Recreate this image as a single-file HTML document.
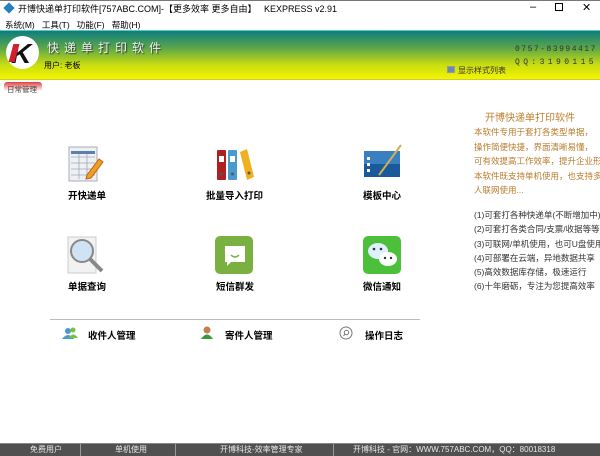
<!DOCTYPE html>
<html><head><meta charset="utf-8"><style>
*{margin:0;padding:0;box-sizing:border-box}
body{width:600px;height:456px;background:#fff;position:relative;overflow:hidden;font-family:"Liberation Sans","Noto Sans CJK SC",sans-serif;font-size:9px;color:#000}
.a{position:absolute;white-space:nowrap}
.lbl{font-weight:bold;font-size:9.5px}
.rt{color:#b87b2c;font-size:8.5px}
.rl{color:#333;font-size:8.5px}
</style></head><body>
<div class="a" style="left:0;top:0;width:600px;height:1px;background:#777"></div>
<div class="a" style="left:5px;top:4px;width:8px;height:8px;background:#2a7fc0;transform:rotate(45deg)"></div>
<div class="a" style="left:18px;top:2px;font-size:9px">开博快递单打印软件[757ABC.COM]-【更多效率 更多自由】&nbsp;&nbsp;&nbsp;KEXPRESS v2.91</div>
<div class="a" style="left:530px;top:1px;font-size:11px">–</div>
<div class="a" style="left:555px;top:3px;width:8px;height:8px;border:1px solid #000"></div>
<div class="a" style="left:582px;top:1px;font-size:11px">✕</div>
<div class="a" style="left:5px;top:19px;font-size:8.5px">系统(M)&nbsp;&nbsp;&nbsp;工具(T)&nbsp;&nbsp;&nbsp;功能(F)&nbsp;&nbsp;&nbsp;帮助(H)</div>
<div class="a" style="left:0;top:30px;width:600px;height:50px;background:linear-gradient(#0f7d80 0%,#5aa64a 35%,#c8dc10 70%,#f5f500 100%);border-top:1px solid #5cc;border-bottom:1px solid #cc3"></div>
<div class="a" style="left:6px;top:36px;width:33px;height:33px;border-radius:50%;background:#fff"></div>
<div class="a" style="left:11px;top:38px;font-size:28px;font-weight:bold;font-style:italic;color:#111;font-family:'Liberation Sans',sans-serif">K</div>
<div class="a" style="left:11px;top:44px;width:6px;height:18px;background:#d02030;transform:skewX(-15deg)"></div>
<div class="a" style="left:47px;top:39px;font-size:12px;letter-spacing:5px;color:#e8f4e8;text-shadow:1px 1px 1px #333">快递单打印软件</div>
<div class="a" style="left:44px;top:60px;font-size:8px">用户: 老板</div>
<div class="a" style="left:515px;top:45px;font-size:8px;letter-spacing:1.5px;color:#333;font-family:'Liberation Mono',monospace">0757-83994417</div>
<div class="a" style="left:515px;top:58px;font-size:8px;letter-spacing:3.4px;color:#333;font-family:'Liberation Mono',monospace">QQ:3190115</div>
<div class="a" style="left:447px;top:66px;width:8px;height:7px;background:#6a8ab0;border:1px solid #999"></div>
<div class="a" style="left:458px;top:65px;font-size:8px;color:#333">显示样式列表</div>
<div class="a" style="left:4px;top:82px;width:38px;height:9px;background:linear-gradient(#e04040,#fff);border-radius:3px 3px 0 0"></div>
<div class="a" style="left:7px;top:84px;font-size:7.5px;color:#444">日常管理</div>
<svg class="a" style="left:67px;top:145px" width="38" height="40"><rect x="2" y="2" width="28" height="34" fill="#eef0f2" stroke="#aab"/><g stroke="#9ab" stroke-width=".8"><line x1="4" y1="12" x2="28" y2="12"/><line x1="4" y1="18" x2="28" y2="18"/><line x1="4" y1="24" x2="28" y2="24"/><line x1="4" y1="30" x2="28" y2="30"/><line x1="12" y1="8" x2="12" y2="34"/><line x1="20" y1="8" x2="20" y2="34"/></g><rect x="4" y="6" width="24" height="3" fill="#5a7fb0"/><path d="M20 30 L32 14 L36 17 L24 33 L19 34Z" fill="#f0a020" stroke="#c06020"/></svg>
<svg class="a" style="left:215px;top:146px" width="40" height="36"><rect x="2" y="4" width="9" height="30" rx="1" fill="#b02020"/><rect x="13" y="4" width="9" height="30" rx="1" fill="#4a9ad0"/><path d="M25 6 L32 3 L39 31 L32 34Z" fill="#f0b020"/><g fill="#fff"><rect x="4" y="10" width="5" height="6"/><rect x="15" y="10" width="5" height="6"/></g><g fill="#555"><circle cx="6.5" cy="28" r="1.5"/><circle cx="17.5" cy="28" r="1.5"/><circle cx="34" cy="27" r="1.5"/></g></svg>
<svg class="a" style="left:363px;top:143px" width="40" height="40"><rect x="1" y="8" width="36" height="26" fill="#1a5a9a"/><rect x="1" y="8" width="36" height="13" fill="#3a80c0"/><g fill="#fff"><rect x="4" y="14" width="3" height="3"/><rect x="4" y="20" width="3" height="3"/><rect x="4" y="26" width="3" height="3"/></g><line x1="16" y1="32" x2="38" y2="2" stroke="#d0b050" stroke-width="2"/></svg>
<div class="a lbl" style="left:68px;top:188px">开快递单</div>
<div class="a lbl" style="left:206px;top:188px">批量导入打印</div>
<div class="a lbl" style="left:363px;top:188px">模板中心</div>
<svg class="a" style="left:67px;top:236px" width="40" height="40"><rect x="1" y="1" width="28" height="36" fill="#f2f2f2" stroke="#ccc"/><circle cx="15" cy="15" r="11" fill="#cfe3f5" stroke="#888" stroke-width="2"/><line x1="23" y1="23" x2="35" y2="35" stroke="#888" stroke-width="4"/></svg>
<svg class="a" style="left:215px;top:236px" width="40" height="38"><rect x="0" y="0" width="38" height="38" rx="5" fill="#7ab040"/><path d="M10 10 H30 V26 H16 L12 30 V26 H10Z" fill="#fff"/><path d="M16 19 Q20 23 24 19" stroke="#7ab040" fill="none" stroke-width="1.5"/></svg>
<svg class="a" style="left:363px;top:236px" width="40" height="38"><rect x="0" y="0" width="38" height="38" rx="5" fill="#4cc03a"/><ellipse cx="15" cy="15" rx="10" ry="8" fill="#dff0ff"/><ellipse cx="25" cy="23" rx="9" ry="7" fill="#fff"/><g fill="#333"><circle cx="11" cy="13" r="1.3"/><circle cx="18" cy="13" r="1.3"/><circle cx="22" cy="22" r="1.2"/><circle cx="28" cy="22" r="1.2"/></g></svg>
<div class="a lbl" style="left:68px;top:279px">单据查询</div>
<div class="a lbl" style="left:216px;top:279px">短信群发</div>
<div class="a lbl" style="left:363px;top:279px">微信通知</div>
<div class="a" style="left:50px;top:319px;width:370px;height:1px;background:#bbb"></div>
<svg class="a" style="left:62px;top:326px" width="16" height="14"><circle cx="6" cy="5" r="3" fill="#4a9ad0"/><path d="M0 13 Q6 5 12 13Z" fill="#4a9ad0"/><circle cx="11" cy="4" r="2.5" fill="#7ac040"/><path d="M7 12 Q11 5 16 12Z" fill="#7ac040"/></svg>
<div class="a lbl" style="left:88px;top:328px">收件人管理</div>
<svg class="a" style="left:200px;top:325px" width="14" height="15"><circle cx="7" cy="5" r="3.5" fill="#c08050"/><path d="M1 14 Q7 5 13 14Z" fill="#3a9a3a"/></svg>
<div class="a lbl" style="left:225px;top:328px">寄件人管理</div>
<svg class="a" style="left:339px;top:326px" width="14" height="14"><circle cx="7" cy="7" r="6" fill="none" stroke="#777"/><circle cx="7.5" cy="6.5" r="2.2" fill="none" stroke="#777"/><line x1="6" y1="8" x2="4.5" y2="10" stroke="#777"/></svg>
<div class="a lbl" style="left:365px;top:328px">操作日志</div>
<div class="a" style="left:485px;top:109px;font-size:10px;color:#c08030">开博快递单打印软件</div>
<div class="a rt" style="left:474px;top:125px;line-height:14.5px">本软件专用于套打各类型单据，<br>操作简便快捷，界面清晰易懂，<br>可有效提高工作效率，提升企业形象。<br>本软件既支持单机使用，也支持多<br>人联网使用...</div>
<div class="a rl" style="left:474px;top:208px;line-height:14.3px">(1)可套打各种快递单(不断增加中)<br>(2)可套打各类合同/支票/收据等等<br>(3)可联网/单机使用，也可U盘使用<br>(4)可部署在云端，异地数据共享<br>(5)高效数据库存储，极速运行<br>(6)十年磨砺，专注为您提高效率</div>
<div class="a" style="left:0;top:443px;width:600px;height:13px;background:#505050;border-top:1px solid #888"></div>
<div class="a" style="left:0;top:444px;width:600px;height:12px;color:#e8e8e8;font-size:8px">
<span class="a" style="left:30px;top:0">免费用户</span>
<span class="a" style="left:80px;top:0;width:1px;height:12px;background:#999"></span>
<span class="a" style="left:115px;top:0">单机使用</span>
<span class="a" style="left:175px;top:0;width:1px;height:12px;background:#999"></span>
<span class="a" style="left:220px;top:0">开博科技-效率管理专家</span>
<span class="a" style="left:333px;top:0;width:1px;height:12px;background:#999"></span>
<span class="a" style="left:353px;top:0">开博科技 - 官网：WWW.757ABC.COM，QQ：80018318</span>
</div>
</body></html>
